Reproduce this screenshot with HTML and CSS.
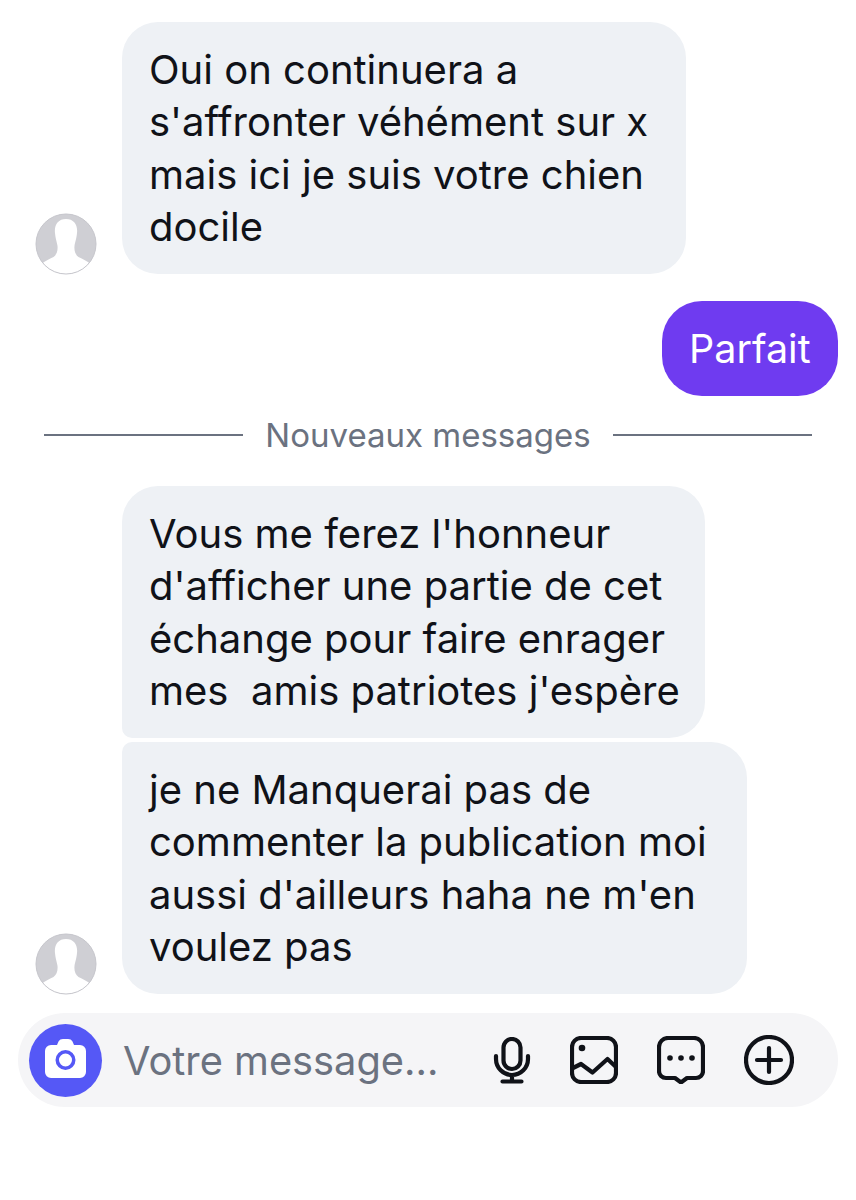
FILE: index.html
```html
<!DOCTYPE html>
<html lang="fr">
<head>
    <meta charset="UTF-8">
    <meta name="viewport" content="width=device-width, initial-scale=1.0">
    <title>Messages</title>
    <link rel="stylesheet" href="styles.css">
</head>
<body>
<div class="thread">
    <div class="row row-first">
        <svg class="avatar" viewBox="0 0 62 62">
            <use href="#avatar-shape"></use>
        </svg>
        <div class="bubble bubble-a">Oui on continuera a<br>s'affronter véhément sur x<br>mais ici je suis votre chien<br>docile</div>
    </div>

    <div class="row row-mine">
        <div class="bubble bubble-mine">Parfait</div>
    </div>

    <div class="divider">
        <span class="divider-line"></span>
        <span class="divider-text">Nouveaux messages</span>
        <span class="divider-line"></span>
    </div>

    <div class="row row-grouped">
        <div class="avatar-space"></div>
        <div class="bubble bubble-b">Vous me ferez l'honneur<br>d'afficher une partie de cet<br>échange pour faire enrager<br>mes &nbsp;amis patriotes j'espère</div>
    </div>
    <div class="row">
        <svg class="avatar" viewBox="0 0 62 62">
            <use href="#avatar-shape"></use>
        </svg>
        <div class="bubble bubble-c">je ne Manquerai pas de<br>commenter la publication moi<br>aussi d'ailleurs haha ne m'en<br>voulez pas</div>
    </div>
</div>

<div class="composer">
    <div class="camera">
        <svg class="camera-icon" viewBox="0 0 41 39">
            <path fill="#fff" fill-rule="evenodd" d="M12 6l1.500-3.500C14.500.8 16 0 18 0h5c2 0 3.500.8 4.500 2.500L29 6h6a6 6 0 0 1 6 6v21a6 6 0 0 1-6 6H6a6 6 0 0 1-6-6V12a6 6 0 0 1 6-6zM20.500 11a10 10 0 1 0 0 20 10 10 0 0 0 0-20zm0 3.500a6.500 6.500 0 1 1 0 13 6.500 6.500 0 0 1 0-13z"></path>
        </svg>
    </div>
    <div class="placeholder">Votre message...</div>
    <div class="tools">
        <svg class="tool tool-mic" viewBox="0 0 38 47">
            <rect x="10.500" y="2" width="17" height="30" rx="8.500"></rect>
            <path d="M3 19v3a16 16 0 0 0 32 0v-3M19 38v6.500M9.500 44.500h19"></path>
        </svg>
        <svg class="tool tool-image" viewBox="0 0 48 48">
            <rect x="2" y="2" width="44" height="44" rx="9"></rect>
            <circle class="tool-fill" cx="12" cy="12" r="3.300"></circle>
            <path d="M3 32l8-4 11.500 8.500 15-13.500 8.500 8"></path>
        </svg>
        <svg class="tool tool-chat" viewBox="0 0 48 48">
            <path d="M11 2h26a9 9 0 0 1 9 9v24a7 7 0 0 1-7 7h-9l-6 4.500-6-4.500H9a7 7 0 0 1-7-7V11a9 9 0 0 1 9-9z"></path>
            <circle class="tool-fill" cx="13" cy="22" r="2.800"></circle>
            <circle class="tool-fill" cx="24" cy="22" r="2.800"></circle>
            <circle class="tool-fill" cx="35" cy="22" r="2.800"></circle>
        </svg>
        <svg class="tool tool-plus" viewBox="0 0 50 50">
            <circle cx="25" cy="25" r="23"></circle>
            <path d="M25 13v24M13 25h24"></path>
        </svg>
    </div>
</div>

<svg class="defs" width="0" height="0">
    <defs>
        <g id="avatar-shape">
            <clipPath id="avatar-clip"><circle cx="31" cy="31" r="30"></circle></clipPath>
            <circle cx="31" cy="31" r="30" fill="#cfcfd4"></circle>
            <path clip-path="url(#avatar-clip)" fill="#fff" d="M31 6c-8 0-12 6-11 14 .5 6 2 9 2.500 13 .5 5-1 9-4 11-4 2-9 4-12 7 5 7 14 11 24.500 11s19.500-4 24.500-11c-3-3-8-5-12-7-3-2-4.500-6-4-11 .5-4 2-7 2.500-13 1-8-3-14-11-14z"></path>
            <circle cx="31" cy="31" r="30" fill="none" stroke="#c6c6cc" stroke-width="1"></circle>
        </g>
    </defs>
</svg>
</body>
</html>
```

FILE: styles.css
```css
body {
    margin: 0;
    background-color: #fff;
    font-family: Inter, "Liberation Sans", sans-serif;
    color: #101218;
}

.thread {
    padding: 22px 18px 0 35px;
}

.row {
    display: flex;
    align-items: flex-end;
    gap: 26px;
}

.row-mine {
    justify-content: flex-end;
    margin-top: 27px;
}

.row-grouped {
    margin-bottom: 4px;
}

.avatar {
    width: 62px;
    height: 62px;
    flex: none;
    margin-bottom: -1px;
}

.avatar-space {
    width: 61px;
    flex: none;
}

.avatar + .bubble {
    margin-left: -1px;
}

.bubble {
    box-sizing: border-box;
    height: 252px;
    padding: 22px 0 22px 27px;
    background-color: #eef1f5;
    border-radius: 36px;
    font-size: 40px;
    line-height: 52.400px;
    white-space: nowrap;
}

.bubble-a {
    width: 564px;
}

.bubble-b {
    width: 583px;
    border-bottom-left-radius: 10px;
}

.bubble-c {
    width: 625px;
    border-top-left-radius: 10px;
}

.bubble-mine {
    width: 176px;
    height: 95px;
    padding: 22px 0 0 27px;
    background-color: #6f3bf0;
    color: #fff;
    border-radius: 40px;
    font-size: 39.500px;
}

.divider {
    display: flex;
    align-items: center;
    margin: 19px 26px 32px 9px;
    height: 39px;
}

.divider-line {
    flex: 1;
    height: 2px;
    background-color: #6b7280;
}

.divider-text {
    padding: 0 22px;
    font-size: 33px;
    color: #6b7280;
    white-space: nowrap;
}

.composer {
    display: flex;
    align-items: center;
    box-sizing: border-box;
    height: 94px;
    margin: 19px 18px 0;
    padding: 0 44px 0 11px;
    background-color: #f5f5f7;
    border-radius: 47px;
}

.camera {
    display: flex;
    align-items: center;
    justify-content: center;
    width: 73px;
    height: 73px;
    flex: none;
    border-radius: 50%;
    background-color: #5558f6;
}

.camera-icon {
    display: block;
    width: 41px;
    height: 39px;
    margin-bottom: 4px;
}

.placeholder {
    flex: 1;
    margin-left: 21px;
    font-size: 39.800px;
    color: #6b7280;
    white-space: nowrap;
}

.tools {
    display: flex;
    align-items: center;
    gap: 39px;
}

.tool {
    display: block;
    fill: none;
    stroke: #101218;
    stroke-width: 4.200;
    stroke-linecap: round;
    stroke-linejoin: round;
}

.tool-fill {
    fill: #101218;
    stroke: none;
}

.tool-mic {
    width: 38px;
    height: 47px;
}

.tool-image,
.tool-chat {
    width: 48px;
    height: 48px;
}

.tool-plus {
    width: 50px;
    height: 50px;
}

.defs {
    position: absolute;
}
```
